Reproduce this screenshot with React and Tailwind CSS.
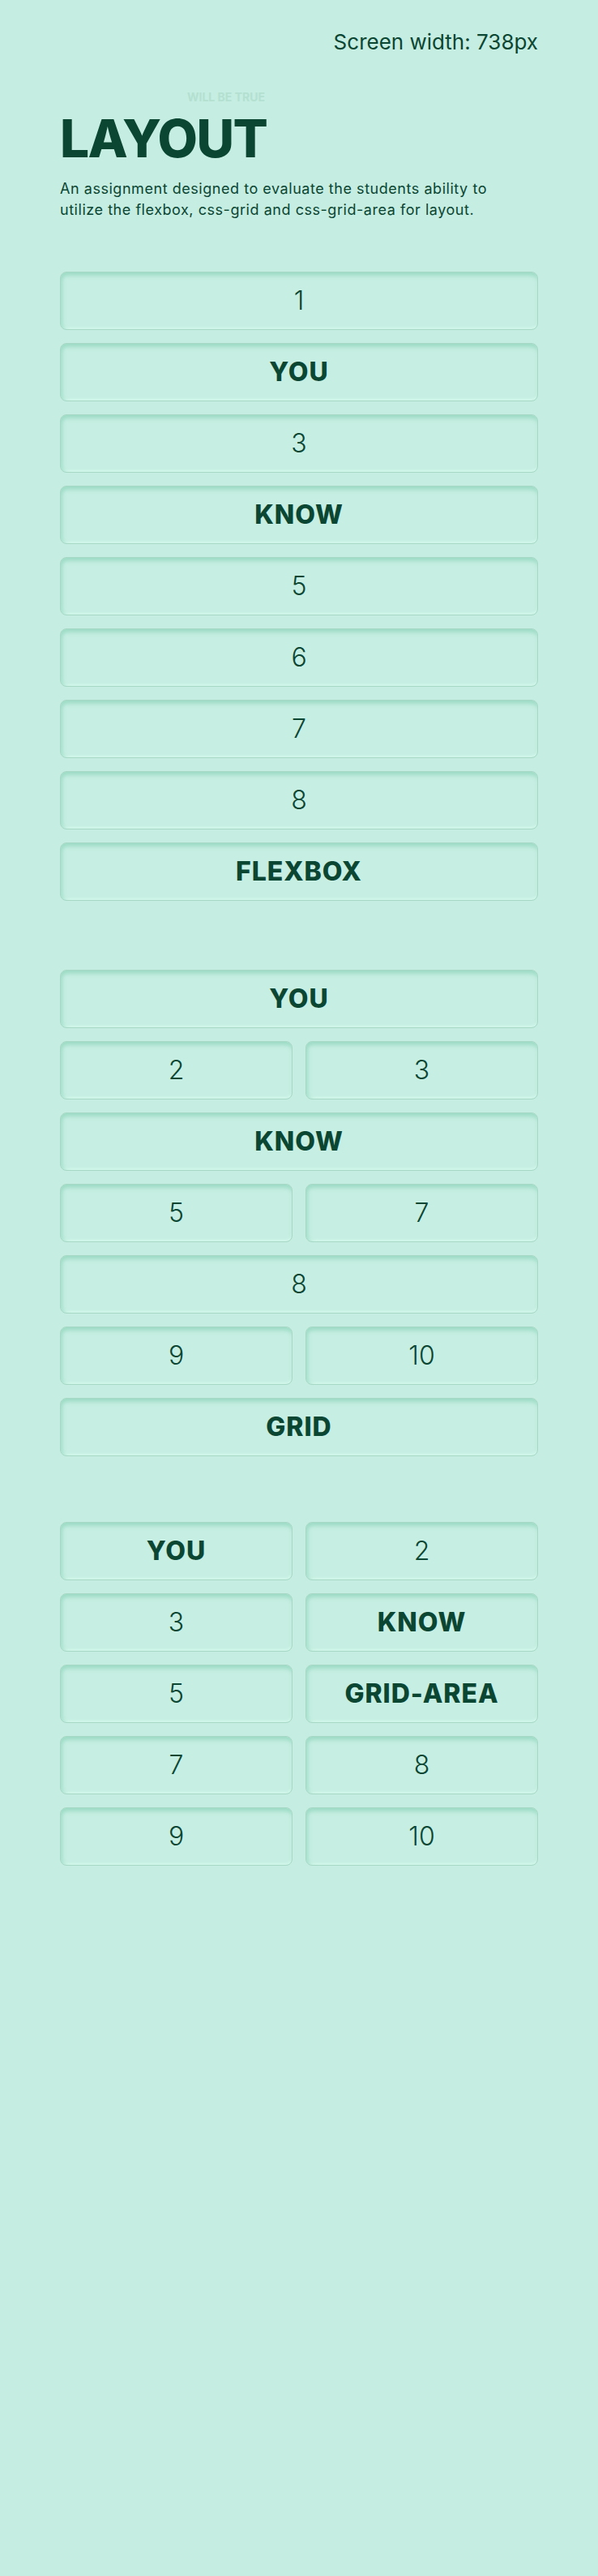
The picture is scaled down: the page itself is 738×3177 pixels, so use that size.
const font = { fontFamily: 'Inter, "Open Sans", sans-serif' };

function Box({ children, bold, wide }) {
  return (
    <div
      className={`${wide ? 'col-span-2' : ''} h-[72px] flex items-center justify-center rounded-[8px] border border-[#a6d8c5] bg-[#c6eee2] shadow-[inset_0_6px_5px_-2px_#9edcc6,inset_5px_0_5px_-3px_#a3dfca,inset_0_-3px_3px_-1px_#d5f8ec] text-[#0b4633] text-[32px] ${bold ? 'font-extrabold tracking-[0.03em]' : 'font-light'}`}
    >
      {children}
    </div>
  );
}

export default function App() {
  const flexItems = ['1', 'YOU', '3', 'KNOW', '5', '6', '7', '8', 'FLEXBOX'];
  const gridItems = [
    ['YOU', true, true],
    ['2', false, false],
    ['3', false, false],
    ['KNOW', true, true],
    ['5', false, false],
    ['7', false, false],
    ['8', false, true],
    ['9', false, false],
    ['10', false, false],
    ['GRID', true, true],
  ];
  const areaItems = [
    ['YOU', true],
    ['2', false],
    ['3', false],
    ['KNOW', true],
    ['5', false],
    ['GRID-AREA', true],
    ['7', false],
    ['8', false],
    ['9', false],
    ['10', false],
  ];

  return (
    <div className="min-h-screen bg-[#c5ede1] text-[#0b4633]" style={font}>
      <div className="w-[590px] mx-auto pb-20">
        {/* header */}
        <div className="pt-[36px] text-right text-[26px] leading-[32px] font-normal">
          Screen width: 738px
        </div>

        <div className="mt-[45px] ml-[157px] text-[14px] leading-[14px] font-bold text-[#b3e0d0]">
          WILL BE TRUE
        </div>
        <h1 className="mt-[15px] text-[64px] leading-[58px] font-extrabold tracking-tight">LAYOUT</h1>
        <p className="mt-[20px] max-w-[560px] text-[18px] leading-[26px] font-normal tracking-[0.03em]">
          An assignment designed to evaluate the students ability to utilize the flexbox, css-grid and
          css-grid-area for layout.
        </p>

        {/* flexbox */}
        <div className="mt-[63px] flex flex-col gap-4">
          {flexItems.map((t, i) => (
            <Box key={i} bold={isNaN(Number(t))}>
              {t}
            </Box>
          ))}
        </div>

        {/* css grid */}
        <div className="mt-[85px] grid grid-cols-2 gap-4">
          {gridItems.map(([t, bold, wide], i) => (
            <Box key={i} bold={bold} wide={wide}>
              {t}
            </Box>
          ))}
        </div>

        {/* grid area */}
        <div className="mt-[81px] grid grid-cols-2 gap-4">
          {areaItems.map(([t, bold], i) => (
            <Box key={i} bold={bold}>
              {t}
            </Box>
          ))}
        </div>
      </div>
    </div>
  );
}
